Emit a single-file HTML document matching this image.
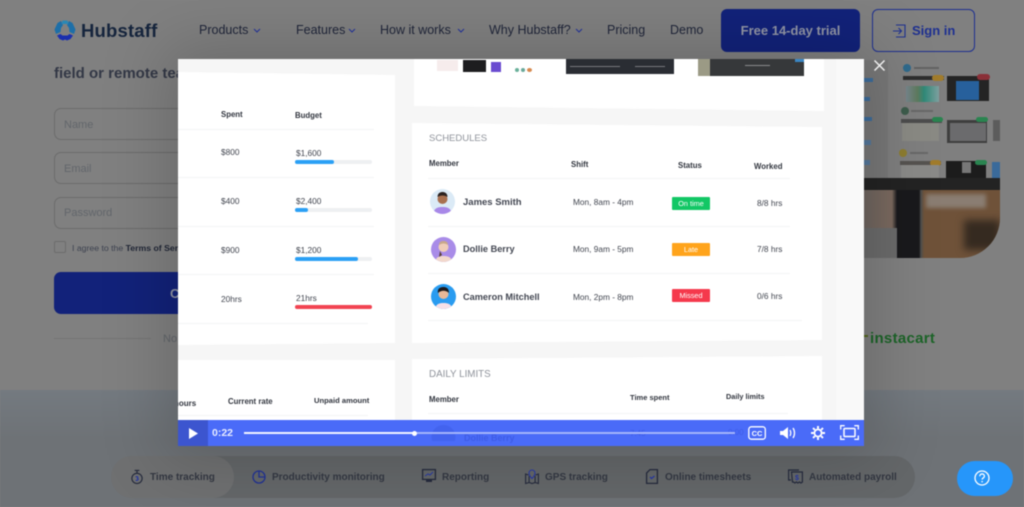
<!DOCTYPE html>
<html lang="en"><head><meta charset="utf-8"><title>Hubstaff</title>
<style>
*{box-sizing:border-box}
html,body{margin:0;padding:0;width:1024px;height:507px;overflow:hidden;background:#808080;font-family:"Liberation Sans",sans-serif}
#w{position:absolute;left:0;top:0;width:1024px;height:507px;overflow:hidden;background:#808080;filter:blur(.45px)}
.a{position:absolute;white-space:nowrap}
.nav{font-size:12.5px;color:#20263a;top:23px;line-height:15px}
.f{font-size:11px;color:#62666b;line-height:13px}
.inp{position:absolute;left:54px;width:200px;height:32px;border:1px solid #6c6c6c;border-radius:7px}
.v{position:absolute;white-space:nowrap;font-size:8.3px;line-height:11px;color:#41454f}
.h{font-weight:bold;font-size:7.8px;color:#32363f}
.n{font-weight:bold;font-size:9.500px;color:#434752}
.line{position:absolute;height:1px;background:#f3f4f5}
.track{position:absolute;left:295px;width:77px;height:4px;border-radius:2px;background:#eef0f2}
.track i{display:block;height:4px;border-radius:2px;background:#2ba0f5}
.badge{position:absolute;left:672px;width:38px;height:13px;border-radius:1px;color:#fff;font-size:7.3px;line-height:13px;text-align:center}
.tab{font-size:10px;font-weight:bold;color:#31353f;top:471px;line-height:13px}
svg{position:absolute;overflow:visible}
</style></head><body><div id="w">

<!-- bottom section -->
<div class="a" style="left:0;top:390px;width:1024px;height:117px;background:linear-gradient(#747a80,#6e7276 50px,#6e7276)"></div>
<div class="a" style="left:112px;top:456px;width:803px;height:42px;border-radius:21px;background:#646769"></div>
<div class="a" style="left:111px;top:456px;width:123px;height:42px;border-radius:21px;background:#6f7071"></div>

<!-- header -->
<svg style="left:54px;top:20px" width="22" height="22" viewBox="0 0 22 22">
<path d="M7 1L3.500 3 .5 9.500 2 14l4.500-2 .5-4 2-3z" fill="#1d6fa8"/><path d="M15 1l3.500 2 3 6.500L20 14l-4.500-2-.5-4-2-3z" fill="#1d6fa8"/><path d="M8.500 .5h5L14.500 4h-7z" fill="#2a88b5"/>
<path d="M3 15.500l3.500-1.500 2 1.500h5l2-1.500 3.500 1.500-2.500 3.500-3.500 1.500-2-1-2 1L5.500 19z" fill="#1a2fae"/></svg>
<div class="a" style="left:81px;top:20px;font-size:18.5px;font-weight:bold;color:#16253d;line-height:22px;letter-spacing:.18px">Hubstaff</div>
<div class="a nav" style="left:199px">Products</div>
<div class="a nav" style="left:296px">Features</div>
<div class="a nav" style="left:380px">How it works</div>
<div class="a nav" style="left:489px">Why Hubstaff?</div>
<div class="a nav" style="left:607px">Pricing</div>
<div class="a nav" style="left:670px">Demo</div>
<svg style="left:0;top:0" width="600" height="40" fill="none" stroke="#26369a" stroke-width="1.1"><path d="M254 29l3 3 3-3M349 29l3 3 3-3M458 29l3 3 3-3M576 29l3 3 3-3"/></svg>
<div class="a" style="left:721px;top:9px;width:139px;height:43px;border-radius:6px;background:#12227a;color:#9296a6;font-weight:bold;font-size:13px;line-height:43px;text-align:center">Free 14-day trial</div>
<div class="a" style="left:872px;top:9px;width:103px;height:43px;border-radius:6px;border:1.5px solid #1e3090"></div>
<svg style="left:893px;top:24px" width="13" height="14" viewBox="0 0 13 14" fill="none" stroke="#1e3090" stroke-width="1.1"><path d="M3 1h9v12H3M0 7h8M5.500 4l3 3-3 3"/></svg>
<div class="a" style="left:912px;top:22px;font-size:13px;font-weight:bold;color:#1e3090;line-height:17px">Sign in</div>

<!-- form -->
<div class="a" style="left:54px;top:65px;font-size:15px;font-weight:bold;color:#333846;line-height:18px">field or remote team</div>
<div class="inp" style="top:108px"></div><div class="a f" style="left:64px;top:119px">Name</div>
<div class="inp" style="top:152px"></div><div class="a f" style="left:64px;top:163px">Email</div>
<div class="inp" style="top:197px"></div><div class="a f" style="left:64px;top:207px">Password</div>
<div class="a" style="left:54px;top:241px;width:12px;height:12px;border:1px solid #6c6c6c;border-radius:2px"></div>
<div class="a" style="left:72px;top:242px;font-size:8.7px;line-height:12px;color:#3d4250">I agree to the <b style="color:#1f2535">Terms of Service</b></div>
<div class="a" style="left:54px;top:272px;width:200px;height:42px;border-radius:7px;background:#12227a"></div>
<div class="a" style="left:170px;top:286px;font-size:13px;font-weight:bold;color:#9296a6;line-height:15px">C</div>
<div class="a" style="left:54px;top:338px;width:97px;height:1px;background:#747474"></div>
<div class="a f" style="left:163px;top:333px">No</div>

<!-- hero image -->
<div class="a" style="left:864px;top:60px;width:136px;height:198px;border-radius:0 0 40px 0;overflow:hidden;background:#787878">
  <div class="a" style="left:24px;top:0;width:112px;height:120px;background:#7f7f7f"></div>
  <div class="a" style="left:0;top:18px;width:9px;height:4px;background:#3d6d9c"></div>
  <div class="a" style="left:0;top:37px;width:6px;height:4px;background:#3d6d9c"></div>
  <div class="a" style="left:0;top:57px;width:8px;height:4px;background:#3d6d9c"></div>
  <div class="a" style="left:0;top:80px;width:7px;height:5px;background:#55789c"></div>
  <div class="a" style="left:0;top:100px;width:6px;height:5px;background:#55789c"></div>
  <!-- row 1 -->
  <div class="a" style="left:39px;top:4px;width:8px;height:8px;border-radius:50%;background:#2f6a8c"></div>
  <div class="a" style="left:50px;top:7px;width:25px;height:2px;background:#636363"></div>
  <div class="a" style="left:39px;top:16px;width:41px;height:4px;background:#2e2e2e"></div>
  <div class="a" style="left:68px;top:15px;width:12px;height:6px;border-radius:3px;background:#a17c2c"></div>
  <div class="a" style="left:42px;top:26px;width:33px;height:16px;background:linear-gradient(90deg,#76868c,#5e7a5e 35%,#2f8a78 55%,#7fa0a0)"></div>
  <div class="a" style="left:83px;top:16px;width:42px;height:25px;background:#242424"></div>
  <div class="a" style="left:92px;top:21px;width:23px;height:19px;background:#27609c"></div>
  <div class="a" style="left:113px;top:14px;width:13px;height:6px;border-radius:3px;background:#8a3038"></div>
  <!-- row 2 -->
  <div class="a" style="left:37px;top:47px;width:8px;height:8px;border-radius:50%;background:#3d5c4c"></div>
  <div class="a" style="left:47px;top:50px;width:22px;height:2px;background:#686868"></div>
  <div class="a" style="left:37px;top:59px;width:41px;height:4px;background:#4d4d4d"></div>
  <div class="a" style="left:68px;top:57px;width:11px;height:5px;border-radius:3px;background:#2a8450"></div>
  <div class="a" style="left:38px;top:63px;width:37px;height:18px;background:#8a8a84"></div>
  <div class="a" style="left:83px;top:60px;width:40px;height:23px;background:#3e3e3e"></div>
  <div class="a" style="left:86px;top:63px;width:36px;height:18px;background:#6b6b6d"></div>
  <div class="a" style="left:112px;top:57px;width:12px;height:5px;border-radius:3px;background:#2a8450"></div>
  <div class="a" style="left:129px;top:60px;width:7px;height:21px;background:#5c5c5c"></div>
  <!-- row 3 -->
  <div class="a" style="left:35px;top:89px;width:8px;height:8px;border-radius:50%;background:#8d7d30"></div>
  <div class="a" style="left:46px;top:92px;width:18px;height:2px;background:#686868"></div>
  <div class="a" style="left:36px;top:101px;width:41px;height:4px;background:#565350"></div>
  <div class="a" style="left:66px;top:100px;width:11px;height:6px;border-radius:3px;background:#a17c2c"></div>
  <div class="a" style="left:37px;top:105px;width:38px;height:15px;background:#8a8a88"></div>
  <div class="a" style="left:82px;top:101px;width:40px;height:19px;background:#1c1c1c"></div>
  <div class="a" style="left:98px;top:102px;width:9px;height:11px;background:#777"></div>
  <div class="a" style="left:111px;top:100px;width:12px;height:5px;border-radius:3px;background:#2a8450"></div>
  <div class="a" style="left:128px;top:102px;width:8px;height:18px;background:#3a6a9a"></div>
  <!-- desk -->
  <div class="a" style="left:0;top:118px;width:136px;height:12px;background:#232323"></div>
  <div class="a" style="left:0;top:130px;width:136px;height:68px;background:linear-gradient(90deg,#6e6560 0,#7c6a5f 28px,#19191c 33px,#19191c 55px,#4e4e4e 57px,#6f5239 60px)"></div>
  <div class="a" style="left:0;top:168px;width:33px;height:30px;background:#6b6b6b"></div>
  <div class="a" style="left:62px;top:134px;width:60px;height:14px;background:#8a7d72;filter:blur(2px)"></div>
  <div class="a" style="left:100px;top:160px;width:36px;height:30px;background:#352a20;filter:blur(4px)"></div>
</div>
<div class="a" style="left:870px;top:330px;font-size:15px;font-weight:bold;color:#1c6428;line-height:17px;letter-spacing:.3px">instacart</div>
<div class="a" style="left:864px;top:335px;width:4px;height:2px;background:#55681f"></div>

<!-- modal shadow -->
<div class="a" style="left:178px;top:59px;width:686px;height:387px;box-shadow:0 0 60px 14px rgba(0,0,0,.17)"></div>

<!-- video -->
<div class="a" style="left:178px;top:59px;width:686px;height:387px;background:#f6f6f6;overflow:hidden"></div>
<div class="a" style="left:836px;top:59px;width:28px;height:361px;background:#f9f9f9"></div>
<div class="a" style="left:178px;top:72px;width:217px;height:273px;background:#fff;clip-path:polygon(0 0,100% 3px,100% 271px,0 100%)"></div>
<div class="a" style="left:414px;top:59px;width:410px;height:52px;background:#fff;clip-path:polygon(0 0,100% 0,100% 100%,0 47px)"></div>
<div class="a" style="left:412px;top:123px;width:410px;height:220px;background:#fff;clip-path:polygon(0 0,100% 4px,100% 217px,0 100%)"></div>
<div class="a" style="left:178px;top:360px;width:217px;height:60px;background:#fff"></div>
<div class="a" style="left:412px;top:356px;width:410px;height:64px;background:#fff;clip-path:polygon(0 3px,100% 0,100% 100%,0 100%)"></div>

<!-- top thumbs -->
<div class="a" style="left:437px;top:60px;width:21px;height:11px;background:#f6ecec"></div>
<div class="a" style="left:463px;top:60px;width:23px;height:12px;background:#1d1d1f"></div>
<div class="a" style="left:491px;top:62px;width:10px;height:10px;background:#6a4bd0"></div>
<div class="a" style="left:515px;top:68px;width:4px;height:4px;border-radius:50%;background:#6ab09a"></div>
<div class="a" style="left:521px;top:68px;width:4px;height:4px;border-radius:50%;background:#6aa89a"></div>
<div class="a" style="left:527px;top:68px;width:5px;height:4px;border-radius:50%;background:#d68a50"></div>
<div class="a" style="left:566px;top:59px;width:108px;height:15px;background:#2a2d33"></div>
<div class="a" style="left:570px;top:66px;width:50px;height:1px;background:#77797d"></div>
<div class="a" style="left:635px;top:66px;width:30px;height:1px;background:#77797d"></div>
<div class="a" style="left:698px;top:59px;width:106px;height:17px;background:#36383a"></div>
<div class="a" style="left:698px;top:59px;width:12px;height:17px;background:#9b9a85"></div>
<div class="a" style="left:745px;top:65px;width:25px;height:1px;background:#8a8b8d"></div>
<div class="a" style="left:795px;top:59px;width:9px;height:3px;background:#3a86c4"></div>

<!-- left table -->
<div class="v h" style="left:221px;top:109px">Spent</div>
<div class="v h" style="left:295px;top:110px">Budget</div>
<div class="line" style="left:178px;top:129px;width:196px"></div>
<div class="line" style="left:178px;top:177px;width:196px"></div>
<div class="line" style="left:178px;top:226px;width:196px"></div>
<div class="line" style="left:178px;top:274px;width:196px"></div>
<div class="line" style="left:178px;top:323px;width:190px"></div>
<div class="v" style="left:221px;top:147px">$800</div><div class="v" style="left:296px;top:148px">$1,600</div>
<div class="track" style="top:160px"><i style="width:39px"></i></div>
<div class="v" style="left:221px;top:196px">$400</div><div class="v" style="left:296px;top:196px">$2,400</div>
<div class="track" style="top:208px"><i style="width:13px"></i></div>
<div class="v" style="left:221px;top:245px">$900</div><div class="v" style="left:296px;top:245px">$1,200</div>
<div class="track" style="top:257px"><i style="width:63px"></i></div>
<div class="v" style="left:221px;top:294px">20hrs</div><div class="v" style="left:296px;top:293px">21hrs</div>
<div class="track" style="top:305px"><i style="width:77px;background:#f24452"></i></div>

<!-- schedules -->
<div class="v" style="left:429px;top:133px;font-size:9.500px;line-height:12px;color:#8f939b">SCHEDULES</div>
<div class="v h" style="left:429px;top:158px">Member</div>
<div class="v h" style="left:571px;top:159px">Shift</div>
<div class="v h" style="left:678px;top:160px">Status</div>
<div class="v h" style="left:754px;top:161px">Worked</div>
<div class="line" style="left:428px;top:178px;width:362px"></div>
<div class="line" style="left:428px;top:226px;width:362px"></div>
<div class="line" style="left:428px;top:273px;width:362px"></div>
<div class="line" style="left:428px;top:320px;width:374px"></div>

<svg style="left:430px;top:189px" width="26" height="25" viewBox="0 0 26 25"><defs><clipPath id="c1"><circle cx="12.500" cy="12.500" r="12.500"/></clipPath></defs><g clip-path="url(#c1)"><rect width="26" height="25" fill="#dbeaf6"/><path d="M3 25c1-6 5-7 9.500-7s8.500 1 9.500 7z" fill="#a888e8"/><circle cx="12.500" cy="10" r="5" fill="#a87050"/><path d="M7.500 8c0-4 3-5 5-5s5 1 5 5c-3-2-7-2-10 0z" fill="#2b2220"/></g></svg>
<svg style="left:431px;top:237px" width="25" height="25" viewBox="0 0 25 25"><defs><clipPath id="c2"><circle cx="12.500" cy="12.500" r="12.500"/></clipPath></defs><g clip-path="url(#c2)"><rect width="25" height="25" fill="#a98ce8"/><path d="M4 25c1-5 4-6 8.500-6s8 1 8.500 6z" fill="#f2d8cc"/><circle cx="12.500" cy="10" r="5" fill="#f0cdb8"/><path d="M8 8c0-3 2-4 4.500-4S17 5 17 8c-3-2-6-2-9 0z" fill="#c9a88a"/><path d="M9 14l-1 6 3-2z" fill="#5a4030"/></g></svg>
<svg style="left:431px;top:284px" width="25" height="25" viewBox="0 0 25 25"><defs><clipPath id="c3"><circle cx="12.500" cy="12.500" r="12.500"/></clipPath></defs><g clip-path="url(#c3)"><rect width="25" height="25" fill="#2a9cf0"/><path d="M4 25c1-5 4-6 8.500-6s8 1 8.500 6z" fill="#f6e0e8"/><circle cx="12.500" cy="10" r="5" fill="#e8b898"/><path d="M7 9c-1-5 3-6 5.500-6S18 4 18 9c-3-3-8-3-11 0z" fill="#1d1a1c"/></g></svg>

<div class="v n" style="left:463px;top:197px">James Smith</div>
<div class="v n" style="left:463px;top:244px;font-size:9.200px">Dollie Berry</div>
<div class="v n" style="left:463px;top:292px;font-size:9.200px">Cameron Mitchell</div>
<div class="v" style="left:573px;top:197px">Mon, 8am - 4pm</div>
<div class="v" style="left:573px;top:244px">Mon, 9am - 5pm</div>
<div class="v" style="left:573px;top:292px">Mon, 2pm - 8pm</div>
<div class="badge" style="top:197px;background:#12c765">On time</div>
<div class="badge" style="top:243px;background:#ffa41c">Late</div>
<div class="badge" style="top:289px;background:#f5394c">Missed</div>
<div class="v" style="left:757px;top:198px">8/8 hrs</div>
<div class="v" style="left:757px;top:244px">7/8 hrs</div>
<div class="v" style="left:757px;top:291px">0/6 hrs</div>

<!-- lower cards -->
<div class="v h" style="left:174px;top:398px;font-size:8px;clip-path:inset(0 0 0 4px)">hours</div>
<div class="v h" style="left:228px;top:396px">Current rate</div>
<div class="v h" style="left:314px;top:395px;font-size:7.6px">Unpaid amount</div>
<div class="line" style="left:178px;top:415px;width:190px"></div>
<div class="v" style="left:429px;top:369px;font-size:9.800px;line-height:12px;color:#8f939b">DAILY LIMITS</div>
<div class="v h" style="left:429px;top:394px">Member</div>
<div class="v h" style="left:630px;top:392px;font-size:7.5px">Time spent</div>
<div class="v h" style="left:726px;top:391px;font-size:7.3px">Daily limits</div>
<div class="line" style="left:428px;top:413px;width:360px"></div>

<!-- control bar -->
<div class="a" style="left:178px;top:420px;width:686px;height:26px;background:#4a6bf8"></div>
<div class="a" style="left:178px;top:420px;width:30px;height:26px;background:#3c55cf"></div>
<svg style="left:431px;top:420px" width="25" height="26"><circle cx="12.500" cy="17" r="12" fill="#4363ee" clip-path="inset(0 0 8px 0)"/></svg>
<div class="a" style="left:464px;top:432px;font-size:9px;font-weight:bold;color:#3f5de6;line-height:12px">Dollie Berry</div>
<div class="a" style="left:630px;top:428px;font-size:8px;color:#3f5de6;line-height:12px">7:45</div>
<div class="a" style="left:728px;top:427px;font-size:8px;color:#3f5de6;line-height:12px">0:00</div>
<svg style="left:189px;top:428px" width="10" height="11"><path d="M0 0l9 5.500L0 11z" fill="#fff"/></svg>
<div class="a" style="left:212px;top:427px;font-size:10.500px;font-weight:bold;color:#e8ecff;line-height:12px">0:22</div>
<div class="a" style="left:244px;top:432px;width:491px;height:2px;background:#a4b4fb"></div>
<div class="a" style="left:244px;top:432px;width:171px;height:2px;background:#f2f4ff"></div>
<div class="a" style="left:412px;top:431px;width:5px;height:5px;border-radius:50%;background:#fff"></div>
<svg style="left:748px;top:426px" width="18" height="14" viewBox="0 0 18 14" fill="none"><rect x=".8" y=".8" width="16.500" height="12.400" rx="2.500" stroke="#fff" stroke-width="1.300"/><text x="9" y="9.800" font-family="Liberation Sans" font-size="7.500" font-weight="bold" fill="#fff" text-anchor="middle">CC</text></svg>
<svg style="left:780px;top:426px" width="16" height="14" viewBox="0 0 16 14" fill="none"><path d="M0 5h3l5-4v12l-5-4H0z" fill="#fff"/><path d="M10 4c1 2 1 4 0 6M13 2c2 3 2 7 0 10" stroke="#fff" stroke-width="1.300"/></svg>
<svg style="left:811px;top:426px" width="14" height="14" viewBox="0 0 14 14" fill="none" stroke="#fff"><circle cx="7" cy="7" r="3.600" stroke-width="1.800"/><path d="M7 0v2.500M7 11.500V14M0 7h2.500M11.500 7H14M2 2l1.800 1.800M10.200 10.200L12 12M12 2l-1.800 1.800M3.800 10.200L2 12" stroke-width="1.900"/></svg>
<svg style="left:840px;top:425px" width="19" height="15" viewBox="0 0 19 15" fill="none" stroke="#fff" stroke-width="1.300"><path d="M.7 4.500V.7h4M14.300.7h4v3.800M18.300 10.500v3.800h-4M4.700 14.300h-4v-3.800"/><rect x="4" y="3.500" width="11" height="8" rx=".8" stroke-width="1.500"/></svg>

<!-- close -->
<svg style="left:874px;top:60px" width="11" height="11" fill="none" stroke="#f0f0f0" stroke-width="1.500"><path d="M.5.500l10 10M10.500.500l-10 10"/></svg>

<!-- tabs -->
<svg style="left:130px;top:469px" width="14" height="16" viewBox="0 0 15 16" fill="none" stroke="#23283a" stroke-width="1.200"><circle cx="7.500" cy="9.500" r="5.500"/><path d="M5 1h5M7.500 1v3"/><path d="M6 8c2-1 3 0 2 1.500 1.500 0 1 3-2 2" stroke="#26369a"/></svg>
<div class="a tab" style="left:150px">Time tracking</div>
<svg style="left:252px;top:470px" width="14" height="14" viewBox="0 0 14 14" fill="none" stroke="#1f2f8c" stroke-width="1.300"><circle cx="7" cy="7" r="6"/><path d="M7 1v6h6"/></svg>
<div class="a tab" style="left:272px">Productivity monitoring</div>
<svg style="left:422px;top:469px" width="14" height="15" viewBox="0 0 14 15" fill="none"><rect x=".6" y=".6" width="12.800" height="9.800" stroke="#23283a" stroke-width="1.300"/><path d="M3 7l3-2 2 1 3-3" stroke="#26369a"/><path d="M4 11h6v2H4z" fill="#23283a"/></svg>
<div class="a tab" style="left:442px">Reporting</div>
<svg style="left:525px;top:469px" width="14" height="16" viewBox="0 0 14 16" fill="none" stroke="#23283a" stroke-width="1.100"><path d="M3.500 6L.6 5v9.500l3.500-1 3 1 3-1 3.300 1V5l-2.900 1M4.100 7v6.500M10.100 7v6.500"/><path d="M7 9.500C5 7.500 4 6 4 4a3 3 0 0 1 6 0c0 2-1 3.500-3 5.500z" stroke="#26369a"/></svg>
<div class="a tab" style="left:545px">GPS tracking</div>
<svg style="left:646px;top:469px" width="12" height="15" viewBox="0 0 12 15" fill="none" stroke="#23283a" stroke-width="1.300"><path d="M4 .6h7.400v13.800H.6V4z"/><path d="M4 8l1.500 1.500L8.500 7" stroke="#26369a"/></svg>
<div class="a tab" style="left:665px">Online timesheets</div>
<svg style="left:788px;top:469px" width="15" height="15" viewBox="0 0 15 15" fill="none" stroke="#23283a" stroke-width="1.200"><path d="M3 11H.6V1H11"/><path d="M3.500 3h10.900v10l-1.500 1-1.500-1-1.500 1-1.500-1-1.500 1-1.500-1-.9 0z"/><text x="9" y="11" font-family="Liberation Sans" font-size="7" font-weight="bold" fill="#26369a" stroke="none" text-anchor="middle">$</text></svg>
<div class="a tab" style="left:809px">Automated payroll</div>

<!-- help -->
<div class="a" style="left:957px;top:461px;width:56px;height:35px;border-radius:18px;background:#2696fa"></div>
<svg style="left:974px;top:470px" width="16" height="16" fill="none" stroke="#fff" stroke-width="1.300"><circle cx="8" cy="8" r="7"/><path d="M5.800 6.200c0-3 4.600-3 4.600 0 0 1.800-2.300 1.700-2.300 3.400"/><path d="M8.100 11v1.300" stroke-width="1.500"/></svg>
</div></body></html>
